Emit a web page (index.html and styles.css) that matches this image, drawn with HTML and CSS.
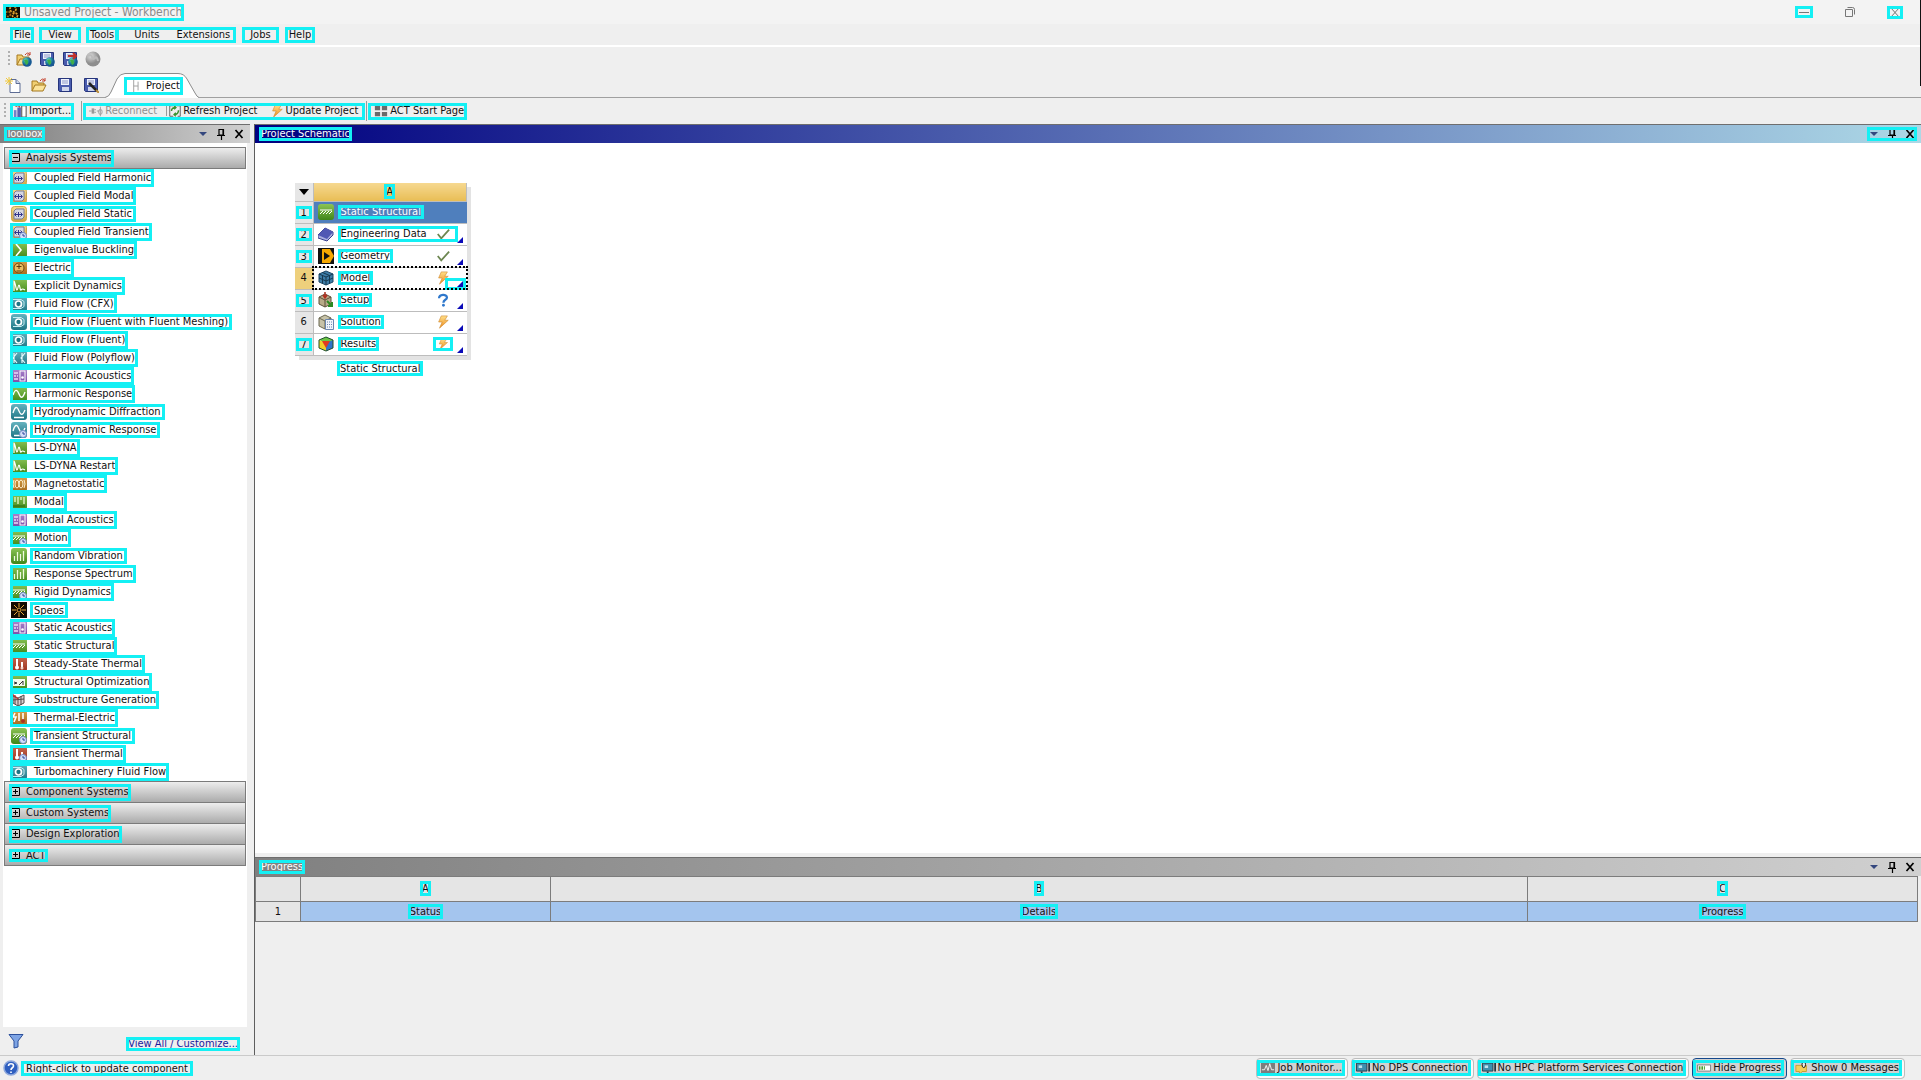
FILE: index.html
```html
<!DOCTYPE html>
<html lang="en">
<head>
<meta charset="utf-8">
<title>Unsaved Project - Workbench</title>
<link rel="stylesheet" href="styles.css">
</head>
<body>
<svg class="defs" width="0" height="0" aria-hidden="true">
  <defs>
    <linearGradient id="gGreen" x2="0" y2="1"><stop offset="0" stop-color="#8cc455"/><stop offset="1" stop-color="#3f8618"/></linearGradient>
    <linearGradient id="gTeal" x2="0" y2="1"><stop offset="0" stop-color="#66b3bf"/><stop offset="1" stop-color="#1d7484"/></linearGradient>
    <linearGradient id="gGold" x2="0" y2="1"><stop offset="0" stop-color="#f5dc8c"/><stop offset="1" stop-color="#cfa440"/></linearGradient>
    <linearGradient id="gOrange" x2="0" y2="1"><stop offset="0" stop-color="#d9a24c"/><stop offset="1" stop-color="#a3681a"/></linearGradient>
    <linearGradient id="gPurple" x2="0" y2="1"><stop offset="0" stop-color="#b08ad0"/><stop offset="1" stop-color="#7747a4"/></linearGradient>
    <linearGradient id="gRed" x2="0" y2="1"><stop offset="0" stop-color="#c96a50"/><stop offset="1" stop-color="#98301d"/></linearGradient>
    <linearGradient id="gBolt" x2="0" y2="1"><stop offset="0" stop-color="#ffe08a"/><stop offset="1" stop-color="#ee8a1a"/></linearGradient>
    <radialGradient id="gGlobe" cx=".35" cy=".3"><stop offset="0" stop-color="#9be0ee"/><stop offset=".5" stop-color="#2a9aa4"/><stop offset="1" stop-color="#175a94"/></radialGradient>
    <radialGradient id="gGrey" cx=".35" cy=".3"><stop offset="0" stop-color="#dcdcdc"/><stop offset="1" stop-color="#8e8e8e"/></radialGradient>
  </defs>
  <symbol id="clock" viewBox="0 0 16 16"><circle cx="12" cy="12" r="3.5" fill="#d5e0f8" stroke="#6f86c4"/><path d="M12 10v2h2" fill="none" stroke="#2c459c"/></symbol>
  <symbol id="coupled" viewBox="0 0 16 16"><rect x=".5" y=".5" width="15" height="15" rx="3" fill="url(#gGold)" stroke="#c9a64c"/><path d="M3 5l2-2h8v8l-2 2H3z" fill="#d6d8e2" stroke="#777b94"/><path d="M4 8.500h7M5.500 6.500l-2 2 2 2M9.500 6.500l2 2-2 2M7.500 6v5" fill="none" stroke="#30348c"/></symbol>
  <symbol id="buckling" viewBox="0 0 16 16"><rect width="16" height="16" rx="3" fill="url(#gGreen)"/><path d="M5 2l5 6-5 6" fill="none" stroke="#fff" stroke-width="1.600"/></symbol>
  <symbol id="electric" viewBox="0 0 16 16"><rect width="16" height="16" rx="3" fill="url(#gOrange)"/><circle cx="8" cy="8" r="5" fill="#e9bf62" stroke="#6d4510"/><path d="M5.500 6.500h5M8 4v5M5.500 11h5" stroke="#5b3608"/></symbol>
  <symbol id="explicit" viewBox="0 0 16 16"><rect width="16" height="16" rx="3" fill="url(#gGreen)"/><path d="M3 13V3c1 0 2 9 3 9s1-5 2-5 1 6 2 5 1-2 4 0" fill="none" stroke="#fff" stroke-width="1.200"/></symbol>
  <symbol id="fluid" viewBox="0 0 16 16"><rect width="16" height="16" rx="3" fill="url(#gTeal)"/><path d="M2 3.500h8l3 2v5l-3 2H2" fill="none" stroke="#c9eef3"/><circle cx="7.500" cy="8" r="3" fill="#1d7484" stroke="#fff" stroke-width="1.700"/></symbol>
  <symbol id="polyflow" viewBox="0 0 16 16"><rect width="16" height="16" rx="3" fill="url(#gTeal)"/><path d="M6 3L2 8l4 5M14 3l-4 5 4 5M3 3v10M11 3v10" fill="none" stroke="#e6fafc" stroke-width="1.200"/></symbol>
  <symbol id="acoustic" viewBox="0 0 16 16"><rect width="16" height="16" rx="3" fill="url(#gPurple)"/><rect x="9" y="3" width="5" height="10" fill="none" stroke="#fff"/><circle cx="11.500" cy="9.500" r="1.300" fill="#fff"/><path d="M3 5h4M3 8h2M6 8h1M3 11h4" stroke="#eadcf6" stroke-width="1.500"/></symbol>
  <symbol id="wave" viewBox="0 0 16 16"><rect width="16" height="16" rx="3" fill="url(#gGreen)"/><path d="M2 9c2-6 4-6 6-1s4 4 6-2" fill="none" stroke="#fff" stroke-width="1.400"/></symbol>
  <symbol id="hydro" viewBox="0 0 16 16"><rect width="16" height="16" rx="3" fill="url(#gTeal)"/><path d="M2 9c2-7 4-7 6-2s4 4 6-1M3 13.500h10" fill="none" stroke="#fff" stroke-width="1.300"/></symbol>
  <symbol id="magnet" viewBox="0 0 16 16"><rect width="16" height="16" rx="3" fill="url(#gOrange)"/><ellipse cx="6" cy="8" rx="2" ry="4" fill="none" stroke="#fff3d2"/><ellipse cx="10" cy="8" rx="2" ry="4" fill="none" stroke="#fff3d2"/><path d="M3 4q-2 4 0 8M13 4q2 4 0 8" fill="none" stroke="#fff3d2"/></symbol>
  <symbol id="modal" viewBox="0 0 16 16"><rect width="16" height="16" rx="3" fill="url(#gGreen)"/><path d="M4 3v5M7 3v7M10 6V3M13 3v7" stroke="#dff3c6" stroke-width="1.400"/><path d="M2 12h12" stroke="#2e6a10"/></symbol>
  <symbol id="static" viewBox="0 0 16 16"><rect width="16" height="16" rx="3" fill="url(#gGreen)"/><path d="M2 6h12M2 10l3-3M5 10l3-3M8 10l3-3M11 10l3-3" stroke="#fff"/></symbol>
  <symbol id="bars" viewBox="0 0 16 16"><rect width="16" height="16" rx="3" fill="url(#gGreen)"/><path d="M3.500 13V8M6.500 13V4M9.500 13V6M12.500 13V3" stroke="#eefadf" stroke-width="1.300"/></symbol>
  <symbol id="speos" viewBox="0 0 16 16"><path d="M0 0h16v16H0z" fill="#140c02"/><path d="M8 1v4M8 11v4M1 8h4M11 8h4M3 3l3 3M10 10l3 3M13 3l-3 3M6 10l-3 3" stroke="#e8a83c"/><circle cx="8" cy="8" r="2" fill="none" stroke="#e8a83c"/></symbol>
  <symbol id="thermal" viewBox="0 0 16 16"><rect width="16" height="16" rx="3" fill="url(#gRed)"/><path d="M6 3v7M11 6v5" stroke="#fff" stroke-width="2"/><circle cx="6" cy="11.500" r="2" fill="#fff"/><circle cx="11" cy="12" r="1.500" fill="#f3d3c8"/></symbol>
  <symbol id="optim" viewBox="0 0 16 16"><rect width="16" height="16" rx="3" fill="url(#gGreen)"/><path d="M2 5h12v7H2z" fill="#f5fbee"/><path d="M3 8l3 1-3 1M8 11l4-4v4" fill="none" stroke="#333"/></symbol>
  <symbol id="substr" viewBox="0 0 16 16"><path d="M2 4l5 2 6-3v8l-6 3-5-3zM7 6v8M2 8l11-1M4 3v9M10 4v9" fill="#d8d0d0" stroke="#554a4a"/><path d="M1 2l6 5" stroke="#b33" stroke-width="1.500"/></symbol>
  <symbol id="thermelec" viewBox="0 0 16 16"><rect width="16" height="16" rx="3" fill="url(#gOrange)"/><path d="M4 3l-2 4h3l-2 5M8 3v8M12 3v8" fill="none" stroke="#fff" stroke-width="1.600"/><circle cx="12" cy="11" r="2" fill="#a8351f"/></symbol>
  <symbol id="bolt" viewBox="0 0 16 16"><path d="M6 1h7l-3 5h4L4 15l3-7H3z" fill="url(#gBolt)" stroke="#cf8a30" stroke-width=".7"/></symbol>
  <symbol id="check" viewBox="0 0 16 16"><path d="M2 8l4 5 9-10" fill="none" stroke="#6c8650" stroke-width="2"/></symbol>
  <symbol id="question" viewBox="0 0 16 16"><path d="M3.500 6c0-5 9-5 9-1 0 3-4 2.500-4 6" fill="none" stroke="#2f78cc" stroke-width="2.600"/><circle cx="8.500" cy="14" r="1.600" fill="#2f78cc"/></symbol>
  <symbol id="corner" viewBox="0 0 6 6"><path d="M6 0v6H0z" fill="#0a0ab8"/></symbol>
  <symbol id="engdata" viewBox="0 0 16 16"><path d="M0 9l7-7 8 4v3l-6 6-9-3z" fill="#a9aede" stroke="#39418f"/><path d="M0 9l7-7 8 4-6 7z" fill="#5058b4"/></symbol>
  <symbol id="geom" viewBox="0 0 16 16"><path d="M0 0h16v16H0z" fill="#111"/><path d="M4 1h8l4 7-4 7H4z" fill="#f7a800"/><path d="M6 4l6 4-6 4z" fill="#111"/></symbol>
  <symbol id="model" viewBox="0 0 16 16"><path d="M1 4l7-3 7 3v8l-7 3-7-3z" fill="#3d7ca6" stroke="#1d4766"/><path d="M1 4l7 3 7-3M8 7v8M1 8l7 3 7-3M4.500 5.500v8M11.500 5.500v8M4.500 2.500l7 3" fill="none" stroke="#16384f"/></symbol>
  <symbol id="setup" viewBox="0 0 16 16"><path d="M1 5l6-3 6 3v7l-6 3-6-3z" fill="#b8aa88" stroke="#5c513a"/><path d="M1 5l6 3 6-3M7 8v7" fill="none" stroke="#5c513a"/><path d="M7 0v5M5 3l2 3 2-3" fill="none" stroke="#b03020" stroke-width="1.500"/><path d="M9 9l5 5M14 10v4h-4" fill="none" stroke="#2d8a22" stroke-width="2"/></symbol>
  <symbol id="solution" viewBox="0 0 16 16"><path d="M1 4l6-3 6 3v8l-6 3-6-3z" fill="#c6c2a8" stroke="#6b6852"/><path d="M1 4l6 3 6-3M7 7v8" fill="none" stroke="#6b6852"/><path d="M7.500 5.500h8v10h-8z" fill="#f1f5fb" stroke="#6a86b0"/><path d="M9 8h5M9 10.500h5M9 13h5" stroke="#6a86b0" stroke-dasharray="1 1"/></symbol>
  <symbol id="results" viewBox="0 0 16 16"><path d="M8 1l7 3v8l-7 3z" fill="#2f73c8"/><path d="M1 4l7-3 7 3-7 3z" fill="#6cc644"/><path d="M1 4l7 3v8l-7-3z" fill="#f2cf2a"/><path d="M4 5l8 0-4 7z" fill="#e03a20"/><path d="M1 4l7-3 7 3v8l-7 3-7-3z" fill="none" stroke="#20512a"/></symbol>
  <symbol id="gears" viewBox="0 0 16 16"><path d="M0 0h16v16H0z" fill="#140e02"/><circle cx="9" cy="5" r="3" fill="none" stroke="#e2a52c" stroke-width="1.700" stroke-dasharray="2 1"/><circle cx="11" cy="11.500" r="2.500" fill="none" stroke="#e2a52c" stroke-width="1.700" stroke-dasharray="2 1"/><circle cx="4" cy="10" r="2.500" fill="none" stroke="#a06b10" stroke-width="1.700" stroke-dasharray="2 1"/></symbol>
  <symbol id="folder" viewBox="0 0 16 16"><path d="M1 14V4h5l1 2h6v3" fill="#f0cf72" stroke="#a5791e"/><path d="M1 14l3-6h11l-3 6z" fill="#fbe39a" stroke="#a5791e"/><path d="M9 4q3-4 5 0M14 1v3h-3" fill="none" stroke="#c4412c"/></symbol>
  <symbol id="disk" viewBox="0 0 16 16"><path d="M1.500 1.500h13v13h-12l-1-1z" fill="#4a5cae" stroke="#26357c"/><path d="M4 2h8v6H4z" fill="#eef1fb"/><path d="M5 4h6M5 6h6" stroke="#8d97c8"/><path d="M5 10h7v4H5z" fill="#cfd5ec"/></symbol>
  <symbol id="globe" viewBox="0 0 16 16"><circle cx="11" cy="11" r="4.800" fill="url(#gGlobe)"/><path d="M8 9q3-2 4 1t-2 4" fill="#3fae4a"/></symbol>
  <symbol id="newfile" viewBox="0 0 16 16"><path d="M5 2.500h6l4 4v9H5z" fill="#fff" stroke="#5d6c94"/><path d="M11 2.500v4h4" fill="#cbd6ee" stroke="#5d6c94"/><path d="M4 0v8M0 4h8M1 1l6 6M7 1L1 7" stroke="#f0c93c"/></symbol>
  <symbol id="pencil" viewBox="0 0 16 16"><path d="M6 6l8 8" stroke="#222" stroke-width="2.500"/><path d="M13 13l3 3" stroke="#b98d3c" stroke-width="2"/></symbol>
  <symbol id="import" viewBox="0 0 16 16"><path d="M1 7h3v8H1z" fill="#7480c8"/><path d="M5 4h4v11H5z" fill="#5561b0"/><path d="M10 2h5v13h-5z" fill="#fff" stroke="#333"/><path d="M3 3q3-3 5 1" fill="none" stroke="#c0392b" stroke-width="1.500"/></symbol>
  <symbol id="plug" viewBox="0 0 16 16"><path d="M0 8h3M9 8h3" stroke="#999"/><path d="M3 5h3v6H3z" fill="#999"/><path d="M6 6.500h2M6 9.500h2" stroke="#999"/><ellipse cx="13" cy="9" rx="2" ry="3" fill="none" stroke="#999"/><path d="M13 3v11" stroke="#999"/></symbol>
  <symbol id="refresh" viewBox="0 0 16 16"><path d="M6 2H2v12h4M10 2h4v12h-3" fill="none" stroke="#555"/><path d="M4 8q0-4 5-4M7 2l2 2-2 2M12 7q0 5-5 5M9 10l-2 2 2 2" fill="none" stroke="#3a9130" stroke-width="1.700"/></symbol>
  <symbol id="tiles" viewBox="0 0 16 16"><path d="M1 2h6v5H1zM9 2h6v5H9zM1 9h6v5H1zM9 9h6v5H9z" fill="#6a6a6a"/></symbol>
  <symbol id="sheet" viewBox="0 0 16 16"><path d="M6.500 1v14M6.500 8h5M11.500 3v10" fill="none" stroke="#999"/></symbol>
  <symbol id="down" viewBox="0 0 12 12"><path d="M2 4h8L6 8z" fill="#34477e"/></symbol>
  <symbol id="pin" viewBox="0 0 12 12"><path d="M4 1.500h4.500V7H4zM2 7.500h8M6.500 8v4M8 2v5" fill="none" stroke="#000" stroke-width="1.200"/></symbol>
  <symbol id="close" viewBox="0 0 12 12"><path d="M2.500 2l7 8M9.500 2l-7 8" stroke="#000" stroke-width="1.700"/></symbol>
  <symbol id="plus" viewBox="0 0 10 10"><path d="M.5.5h8v8h-8zM2 4.500h5M4.500 2v5" fill="none" stroke="#000"/></symbol>
  <symbol id="minus" viewBox="0 0 10 10"><path d="M.5.5h8v8h-8zM2 4.500h5" fill="none" stroke="#000"/></symbol>
  <symbol id="funnel" viewBox="0 0 16 16"><path d="M1 1.500h14L10 8v6l-4 1V8z" fill="#7ea4e4" stroke="#2c509c"/></symbol>
  <symbol id="help" viewBox="0 0 16 16"><circle cx="8" cy="8" r="7" fill="#2f5fc0" stroke="#8ea8dc" stroke-width="1.500"/><path d="M5.500 6c0-3 5-3 5 0 0 2-2.500 1.500-2.500 4M8 11.500V13" fill="none" stroke="#fff" stroke-width="1.600"/></symbol>
  <symbol id="monitor" viewBox="0 0 16 16"><path d="M0 1h16v14H0z" fill="#7d7d7d"/><path d="M1 10h3l2-5 2 6 2-8 2 7h3" fill="none" stroke="#fff"/></symbol>
  <symbol id="screen" viewBox="0 0 16 16"><path d="M.5 2.500h12v9H.5z" fill="#3f8fae" stroke="#223540"/><path d="M3 15h7M6.500 12v3M15 2v10" stroke="#223540" stroke-width="2"/><path d="M3 5h4v3H3z" fill="#bfe2ee"/></symbol>
  <symbol id="progress" viewBox="0 0 16 16"><path d="M.5 4.500h15v7H.5z" fill="#fff" stroke="#777"/><path d="M2 8h7" stroke="#4aa02c" stroke-width="4" stroke-dasharray="2 1"/></symbol>
  <symbol id="bubble" viewBox="0 0 16 16"><path d="M1 5h12v7H8l-3 4v-4H1z" fill="#f5cf5a" stroke="#c29a2c"/><ellipse cx="10" cy="4" rx="2" ry="3.500" fill="#eee" stroke="#000"/></symbol>
</svg>

<header class="titlebar">
  <span class="mark title"><svg width="16" height="16"><use href="#gears"/></svg>Unsaved Project - Workbench</span>
  <div class="window-buttons">
    <button class="mark" aria-label="Minimize"><svg width="16" height="10"><path d="M3 5.500h10" stroke="#777"/></svg></button>
    <button aria-label="Restore"><svg width="12" height="12"><path d="M1.500 3.500h7v7h-7zM3.500 1.500h5q2 0 2 2v5" fill="none" stroke="#777"/></svg></button>
    <button class="mark" aria-label="Close"><svg width="14" height="11"><path d="M3 1l8 9M11 1l-8 9" stroke="#777"/></svg></button>
  </div>
</header>

<nav class="menubar">
  <button class="mark">File</button>
  <button class="mark view">View</button>
  <button class="mark">Tools</button>
  <span class="mark pair"><button>Units</button><button>Extensions</button></span>
  <button class="mark jobs">Jobs</button>
  <button class="mark">Help</button>
</nav>

<div class="toolbar remote">
  <i class="grip"></i>
  <button aria-label="Open from repository"><svg width="16" height="16"><use href="#folder"/><use href="#globe"/></svg></button>
  <button aria-label="Save to repository"><svg width="16" height="16"><use href="#disk"/><use href="#globe"/></svg></button>
  <button aria-label="Send changes"><svg width="16" height="16"><use href="#disk"/><use href="#globe"/><path d="M6 5h8M11 2l3 3-3 3" fill="none" stroke="#c0302a" stroke-width="2"/></svg></button>
  <button aria-label="Get changes" disabled><svg width="16" height="16"><circle cx="8" cy="8" r="7.500" fill="url(#gGrey)"/><path d="M3 5q3-2 4 1t3 1 3 3" fill="none" stroke="#bbb" stroke-width="2"/></svg></button>
</div>

<div class="toolbar file">
  <button aria-label="New"><svg width="16" height="16"><use href="#newfile"/></svg></button>
  <button aria-label="Open"><svg width="16" height="16"><use href="#folder"/></svg></button>
  <button aria-label="Save"><svg width="16" height="16"><use href="#disk"/></svg></button>
  <button aria-label="Save As"><svg width="16" height="16"><use href="#disk"/><use href="#pencil"/></svg></button>
  <button class="tab">
    <svg class="tab-shape" width="94" height="25"><path d="M0 24.500Q4 24 6 19L12 6Q15 .5 20 .5H73Q79 .5 82 6L90 20Q92 24 94 25V25H0z" fill="#fff"/><path d="M0 24.500Q4 24 6 19L12 6Q15 .5 20 .5H73Q79 .5 82 6L90 20Q92 24 94 24.500" fill="none" stroke="#8c8c8c"/></svg>
    <span class="mark tab-label"><svg width="16" height="14"><use href="#sheet"/></svg>Project</span>
  </button>
</div>

<div class="toolbar actions">
  <i class="grip"></i>
  <button class="mark import"><svg width="16" height="14"><use href="#import"/></svg>Import...</button>
  <i class="sep"></i>
  <div class="mark action-group">
    <button disabled><svg width="16" height="14"><use href="#plug"/></svg>Reconnect</button>
    <i class="sep short"></i>
    <button class="refresh"><svg width="14" height="14"><use href="#refresh"/></svg>Refresh Project</button>
    <button class="update"><svg width="14" height="14"><use href="#bolt"/></svg>Update Project</button>
  </div>
  <i class="sep"></i>
  <button class="mark act"><svg width="16" height="14"><use href="#tiles"/></svg>ACT Start Page</button>
</div>

<main class="workspace">
  <aside class="toolbox">
    <div class="panel-head grey">
      <h2 class="mark">Toolbox</h2>
      <div class="panel-tools">
        <button aria-label="Menu"><svg width="12" height="12"><use href="#down"/></svg></button>
        <button aria-label="Pin"><svg width="12" height="12"><use href="#pin"/></svg></button>
        <button aria-label="Close"><svg width="12" height="12"><use href="#close"/></svg></button>
      </div>
    </div>
    <div class="toolbox-body">
      <button class="group"><span class="mark"><svg width="10" height="10"><use href="#minus"/></svg>Analysis Systems</span></button>
      <ul class="systems">
        <li><span class="mark"><svg width="16" height="16"><use href="#coupled"/></svg>Coupled Field Harmonic</span></li>
        <li><span class="mark"><svg width="16" height="16"><use href="#coupled"/></svg>Coupled Field Modal</span></li>
        <li><svg width="16" height="16"><use href="#coupled"/></svg><span class="mark">Coupled Field Static</span></li>
        <li><span class="mark"><svg width="16" height="16"><use href="#coupled"/><use href="#clock"/></svg>Coupled Field Transient</span></li>
        <li><span class="mark"><svg width="16" height="16"><use href="#buckling"/></svg>Eigenvalue Buckling</span></li>
        <li><span class="mark"><svg width="16" height="16"><use href="#electric"/></svg>Electric</span></li>
        <li><span class="mark"><svg width="16" height="16"><use href="#explicit"/></svg>Explicit Dynamics</span></li>
        <li><span class="mark"><svg width="16" height="16"><use href="#fluid"/></svg>Fluid Flow (CFX)</span></li>
        <li><svg width="16" height="16"><use href="#fluid"/></svg><span class="mark">Fluid Flow (Fluent with Fluent Meshing)</span></li>
        <li><span class="mark"><svg width="16" height="16"><use href="#fluid"/></svg>Fluid Flow (Fluent)</span></li>
        <li><span class="mark"><svg width="16" height="16"><use href="#polyflow"/></svg>Fluid Flow (Polyflow)</span></li>
        <li><span class="mark"><svg width="16" height="16"><use href="#acoustic"/></svg>Harmonic Acoustics</span></li>
        <li><span class="mark"><svg width="16" height="16"><use href="#wave"/></svg>Harmonic Response</span></li>
        <li><svg width="16" height="16"><use href="#hydro"/></svg><span class="mark">Hydrodynamic Diffraction</span></li>
        <li><svg width="16" height="16"><use href="#hydro"/><use href="#clock"/></svg><span class="mark">Hydrodynamic Response</span></li>
        <li><span class="mark"><svg width="16" height="16"><use href="#explicit"/></svg>LS-DYNA</span></li>
        <li><span class="mark"><svg width="16" height="16"><use href="#explicit"/></svg>LS-DYNA Restart</span></li>
        <li><span class="mark"><svg width="16" height="16"><use href="#magnet"/></svg>Magnetostatic</span></li>
        <li><span class="mark"><svg width="16" height="16"><use href="#modal"/></svg>Modal</span></li>
        <li><span class="mark"><svg width="16" height="16"><use href="#acoustic"/></svg>Modal Acoustics</span></li>
        <li><span class="mark"><svg width="16" height="16"><use href="#static"/><use href="#clock"/></svg>Motion</span></li>
        <li><svg width="16" height="16"><use href="#bars"/></svg><span class="mark">Random Vibration</span></li>
        <li><span class="mark"><svg width="16" height="16"><use href="#bars"/></svg>Response Spectrum</span></li>
        <li><span class="mark"><svg width="16" height="16"><use href="#static"/><use href="#clock"/></svg>Rigid Dynamics</span></li>
        <li><svg width="16" height="16"><use href="#speos"/></svg><span class="mark low">Speos</span></li>
        <li><span class="mark"><svg width="16" height="16"><use href="#acoustic"/></svg>Static Acoustics</span></li>
        <li><span class="mark"><svg width="16" height="16"><use href="#static"/></svg>Static Structural</span></li>
        <li><span class="mark"><svg width="16" height="16"><use href="#thermal"/></svg>Steady-State Thermal</span></li>
        <li><span class="mark"><svg width="16" height="16"><use href="#optim"/></svg>Structural Optimization</span></li>
        <li><span class="mark"><svg width="16" height="16"><use href="#substr"/></svg>Substructure Generation</span></li>
        <li><span class="mark"><svg width="16" height="16"><use href="#thermelec"/></svg>Thermal-Electric</span></li>
        <li><svg width="16" height="16"><use href="#static"/><use href="#clock"/></svg><span class="mark">Transient Structural</span></li>
        <li><span class="mark"><svg width="16" height="16"><use href="#thermal"/><use href="#clock"/></svg>Transient Thermal</span></li>
        <li><span class="mark"><svg width="16" height="16"><use href="#fluid"/></svg>Turbomachinery Fluid Flow</span></li>
      </ul>
      <button class="group"><span class="mark"><svg width="10" height="10"><use href="#plus"/></svg>Component Systems</span></button>
      <button class="group"><span class="mark"><svg width="10" height="10"><use href="#plus"/></svg>Custom Systems</span></button>
      <button class="group"><span class="mark"><svg width="10" height="10"><use href="#plus"/></svg>Design Exploration</span></button>
      <button class="group"><span class="mark low"><svg width="10" height="10"><use href="#plus"/></svg>ACT</span></button>
    </div>
    <div class="toolbox-foot">
      <button aria-label="Filter"><svg width="16" height="16"><use href="#funnel"/></svg></button>
      <a class="mark" href="#customize">View All / Customize...</a>
    </div>
  </aside>

  <div class="content">
    <section class="schematic">
      <div class="panel-head blue">
        <h2 class="mark">Project Schematic</h2>
        <div class="panel-tools mark">
          <button aria-label="Menu"><svg width="12" height="12"><use href="#down"/></svg></button>
          <button aria-label="Pin"><svg width="12" height="12"><use href="#pin"/></svg></button>
          <button aria-label="Close"><svg width="12" height="12"><use href="#close"/></svg></button>
        </div>
      </div>
      <div class="canvas">
        <div class="system">
          <table>
            <tr class="col-head"><th><svg width="10" height="6"><path d="M0 0h10L5 6z" fill="#000"/></svg></th><th><span class="mark tiny">A</span></th></tr>
            <tr class="selected"><th><span class="mark num">1</span></th><td><div class="cell"><svg width="16" height="16"><use href="#static"/></svg><span class="mark name">Static Structural</span></div></td></tr>
            <tr><th><span class="mark num">2</span></th><td><div class="cell"><svg width="16" height="16"><use href="#engdata"/></svg><span class="mark name wide">Engineering Data<svg width="14" height="14"><use href="#check"/></svg></span><svg class="corner" width="6" height="6"><use href="#corner"/></svg></div></td></tr>
            <tr><th><span class="mark num">3</span></th><td><div class="cell"><svg width="16" height="16"><use href="#geom"/></svg><span class="mark name">Geometry</span><svg class="state" width="14" height="14"><use href="#check"/></svg><svg class="corner" width="6" height="6"><use href="#corner"/></svg></div></td></tr>
            <tr class="focused"><th>4</th><td><div class="cell"><svg width="16" height="16"><use href="#model"/></svg><span class="mark name">Model</span><svg class="state" width="14" height="14"><use href="#bolt"/></svg><span class="mark corner-mark"><svg width="6" height="6"><use href="#corner"/></svg></span></div></td></tr>
            <tr><th><span class="mark num">5</span></th><td><div class="cell"><svg width="16" height="16"><use href="#setup"/></svg><span class="mark name">Setup</span><svg class="state" width="14" height="14"><use href="#question"/></svg><svg class="corner" width="6" height="6"><use href="#corner"/></svg></div></td></tr>
            <tr><th>6</th><td><div class="cell"><svg width="16" height="16"><use href="#solution"/></svg><span class="mark name">Solution</span><svg class="state" width="14" height="14"><use href="#bolt"/></svg><svg class="corner" width="6" height="6"><use href="#corner"/></svg></div></td></tr>
            <tr><th><span class="mark num">7</span></th><td><div class="cell"><svg width="16" height="16"><use href="#results"/></svg><span class="mark name">Results</span><span class="mark state-mark"><svg width="14" height="12"><use href="#bolt"/></svg></span><svg class="corner" width="6" height="6"><use href="#corner"/></svg></div></td></tr>
          </table>
          <p class="caption"><span class="mark name">Static Structural</span></p>
        </div>
      </div>
    </section>

    <section class="progress">
      <div class="panel-head grey">
        <h2 class="mark">Progress</h2>
        <div class="panel-tools">
          <button aria-label="Menu"><svg width="12" height="12"><use href="#down"/></svg></button>
          <button aria-label="Pin"><svg width="12" height="12"><use href="#pin"/></svg></button>
          <button aria-label="Close"><svg width="12" height="12"><use href="#close"/></svg></button>
        </div>
      </div>
      <table>
        <colgroup><col class="c-num"><col class="c-status"><col><col class="c-progress"></colgroup>
        <tr><th></th><th><span class="mark tiny">A</span></th><th><span class="mark tiny">B</span></th><th><span class="mark tiny">C</span></th></tr>
        <tr class="data"><th>1</th><td><span class="mark">Status</span></td><td><span class="mark">Details</span></td><td><span class="mark">Progress</span></td></tr>
      </table>
    </section>
  </div>
</main>

<footer class="statusbar">
  <svg width="16" height="16"><use href="#help"/></svg>
  <span class="mark hint">Right-click to update component</span>
  <div class="status-buttons">
    <button><span class="mark"><svg width="16" height="14"><use href="#monitor"/></svg>Job Monitor...</span></button>
    <button><span class="mark"><svg width="16" height="14"><use href="#screen"/></svg>No DPS Connection</span></button>
    <button><span class="mark"><svg width="16" height="14"><use href="#screen"/></svg>No HPC Platform Services Connection</span></button>
    <button class="active"><span class="mark"><svg width="16" height="14"><use href="#progress"/></svg>Hide Progress</span></button>
    <button><span class="mark"><svg width="16" height="14"><use href="#bubble"/></svg>Show 0 Messages</span></button>
  </div>
</footer>
<div class="edge"></div>
</body>
</html>
```
FILE: styles.css
```css
* { box-sizing: border-box; }
body {
  margin: 0;
  min-height: 100vh;
  display: flex;
  flex-direction: column;
  background: #efefef;
  color: #111;
  font: 11px/14px "DejaVu Sans Condensed", "DejaVu Sans", sans-serif;
  position: relative;
  overflow-x: hidden;
}
svg { display: block; flex: none; }
.defs { position: absolute; }
button {
  font: inherit; color: inherit; background: none; border: 0; padding: 0;
  display: flex; align-items: center; white-space: nowrap;
}
h2, p, ul { margin: 0; padding: 0; font: inherit; list-style: none; }
table { border-collapse: collapse; }
th { font-weight: normal; }
.mark { outline: 3px solid #14f0f4; outline-offset: -2px; white-space: nowrap; }

/* Title and menus */
.titlebar {
  height: 24px; display: flex; align-items: center; justify-content: space-between;
  background: #f3f3f3; padding: 0 19px 0 4px; color: #8a8a8a; font-size: 12px;
}
.title { display: flex; align-items: center; gap: 4px; height: 15px; padding-right: 1px; }
.window-buttons { display: flex; align-items: center; gap: 32px; }
.menubar {
  height: 23px; display: flex; align-items: center; padding: 0 11px;
  border-bottom: 2px solid #fff;
}
.menubar .mark { height: 14px; padding: 0 3px; }
.menubar .view { margin: 0 7px; padding: 0 8px; }
.menubar .pair { display: flex; gap: 17px; padding: 0 5px 0 17px; }
.menubar .jobs { margin: 0 8px; padding: 0 7px; }

/* Toolbars */
.toolbar { display: flex; align-items: center; }
.grip { width: 2px; height: 16px; background: repeating-linear-gradient(#b0b0b0 0 2px, transparent 2px 4px); }
.remote { height: 24px; gap: 7px; padding-left: 8px; }
.remote .grip { margin-right: -1px; }
.file { height: 27px; gap: 10px; padding-left: 5px; border-bottom: 1px solid #a0a0a0; align-items: flex-end; }
.file > button { height: 26px; margin-bottom: -1px; }
.file .tab { position: relative; width: 94px; height: 25px; margin-left: -4px; padding-left: 20px; }
.tab-shape { position: absolute; left: 0; top: 0; }
.tab-label { display: flex; align-items: center; gap: 3px; height: 16px; padding: 0 2px; z-index: 1; }
.actions { height: 26px; padding-left: 4px; }
.actions .mark { height: 15px; }
.actions button { gap: 1px; }
.import { margin-left: 5px; padding: 0 2px 0 1px; }
.sep { width: 1px; height: 20px; background: #9a9a9a; }
.import + .sep { margin-left: 8px; }
.action-group { display: flex; align-items: center; padding: 0 6px 0 4px; margin: 0 2px; }
.action-group button:disabled { color: #8f8f8f; }
.sep.short { height: 10px; margin-left: 9px; }
.refresh { margin-left: 1px; }
.update { margin-left: 13px; }
.act { padding: 0 2px 0 4px; margin-left: 2px; }

/* Panels */
.workspace { flex: 1; display: grid; grid-template-columns: 254px 1fr; }
.toolbox { display: flex; flex-direction: column; padding-right: 4px; }
.panel-head {
  height: 19px; display: flex; align-items: center; justify-content: space-between;
  padding: 0 5px; color: #fff; border-top: 1px solid #6e6e6e;
}
.panel-head.grey { background: linear-gradient(90deg, #808080, #d0d0d0); }
.panel-head.blue { background: linear-gradient(90deg, #000080, #add8e6); }
.panel-head h2 { line-height: 12px; padding: 0 1px; }
.panel-tools { display: flex; align-items: center; gap: 6px; height: 12px; }
.toolbox-body { flex: 1; background: #fff; margin: 0 3px; padding: 4px 1px 0; }
.group {
  width: 100%; height: 22px; margin-bottom: -1px; padding-left: 5px;
  border: 1px solid #7b7b7b; background: linear-gradient(#ededed, #ababab);
}
.group .mark { display: flex; align-items: center; gap: 5px; height: 15px; padding: 0 1px; }
.mark.low, .group .mark.low { height: 11px; line-height: 11px; }
.systems { padding-top: 1px; }
.systems li { height: 18px; padding-left: 7px; display: flex; align-items: center; }
.systems .mark { display: flex; align-items: center; gap: 7px; height: 16px; padding-right: 2px; }
.systems svg + .mark { height: 14px; margin-left: 4px; padding: 0 3px; }
.toolbox-foot { height: 28px; display: flex; align-items: center; justify-content: space-between; padding: 0 11px 0 8px; }
.toolbox-foot a { color: #1a1a9c; text-decoration: none; line-height: 12px; padding: 0 1px; margin-top: 5px; }

/* Schematic */
.content { display: flex; flex-direction: column; border-left: 1px solid #5e5e5e; }
.schematic { flex: 1; display: flex; flex-direction: column; }
.canvas { flex: 1; position: relative; background: #fff; }
.system { position: absolute; left: 40px; top: 40px; }
.system table { width: 172px; background: #fff; box-shadow: 4px 4px 0 #e3e3e3; }
.system th { width: 18px; height: 22px; padding: 0; background: #e6e6e6; border-bottom: 1px solid #bdbdbd; border-right: 1px solid #bdbdbd; }
.system th svg { margin: auto; }
.system td { padding: 0; border-bottom: 1px solid #bdbdbd; }
.system .col-head th { height: 18px; }
.col-head th + th { width: auto; background: linear-gradient(#f6d890, #e8bd55); }
.selected td { background: #4f7fbd; color: #fff; }
.system .focused th { background: #eed07c; }
.focused td { outline: 2px dotted #000; outline-offset: -1px; }
.cell { height: 21px; display: flex; align-items: center; padding: 0 4px; }
.name { line-height: 12px; padding: 0 2px; }
.cell .name { margin-left: 5px; margin-right: auto; }
.wide { display: flex; align-items: center; justify-content: space-between; flex: 1; height: 14px; padding-right: 7px; }
.num { display: block; line-height: 11px; margin: 0 2px; }
.corner { align-self: flex-end; margin: 0 0 2px 7px; }
.wide + .corner { margin-left: 0; }
.corner-mark { align-self: flex-end; padding: 2px 2px 2px 11px; margin: 0 -2px 0 -4px; }
.state-mark { padding: 0 2px; margin: 0 -2px 0 0; }
.caption { margin: 6px 0 0 43px; }

/* Progress */
.progress { height: 202px; padding-top: 4px; }
.progress table { width: calc(100% - 3px); table-layout: fixed; text-align: center; }
.c-num { width: 45px; }
.c-status { width: 250px; }
.c-progress { width: 390px; }
.progress th, .progress td { border: 1px solid #7c7c7c; padding: 0; height: 25px; background: #e5e5e5; }
.progress .data th, .progress .data td { height: 20px; }
.progress .data td { background: #a4c5ee; }
.progress td .mark { padding: 0 1px; }
.tiny { line-height: 12px; padding: 0 1px; }

/* Status bar */
.statusbar { height: 25px; display: flex; align-items: center; gap: 3px; padding: 0 16px 0 3px; border-top: 1px solid #cacaca; }
.hint { line-height: 13px; padding: 0 4px; }
.status-buttons { margin-left: auto; display: flex; gap: 3px; }
.status-buttons button { height: 21px; padding: 0 3px 0 1px; background: #d2d2d2; border: 1px solid #bdbdbd; border-radius: 4px; box-shadow: inset 0 0 0 2px #fafafa; }
.status-buttons .active { border-color: #14488c; box-shadow: none; }
.status-buttons .mark { display: flex; align-items: center; gap: 1px; height: 14px; padding: 0 2px; }
.edge { position: absolute; top: 0; right: 0; width: 1px; height: 86px; background: #111; }
```
